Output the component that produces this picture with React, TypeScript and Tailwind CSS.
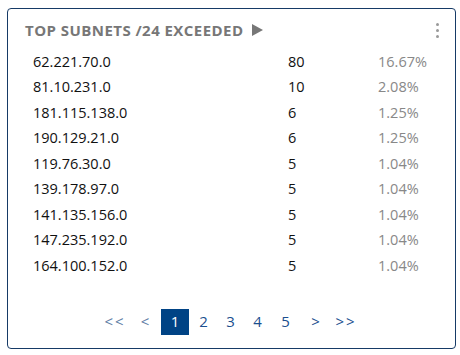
import {FC} from "react";

const rows: [string, string, string][] = [
    ["62.221.70.0", "80", "16.67%"],
    ["81.10.231.0", "10", "2.08%"],
    ["181.115.138.0", "6", "1.25%"],
    ["190.129.21.0", "6", "1.25%"],
    ["119.76.30.0", "5", "1.04%"],
    ["139.178.97.0", "5", "1.04%"],
    ["141.135.156.0", "5", "1.04%"],
    ["147.235.192.0", "5", "1.04%"],
    ["164.100.152.0", "5", "1.04%"],
];

const Pager: FC = () => (
    <div className="flex items-center justify-center mt-[30px] ml-[-2px] text-[15px] text-[#1b4f8f]">
        <span className="w-[30px] text-center text-[#5f7ea6] tracking-[2px]">&lt;&lt;</span>
        <span className="w-[30px] text-center text-[#5f7ea6]">&lt;</span>
        <span className="w-[30px] flex justify-center">
            <span className="w-[28px] h-[26px] bg-[#004385] text-white flex items-center justify-center">1</span>
        </span>
        <span className="w-[27px] text-center">2</span>
        <span className="w-[27px] text-center">3</span>
        <span className="w-[27px] text-center">4</span>
        <span className="w-[29px] text-center">5</span>
        <span className="w-[31px] text-center">&gt;</span>
        <span className="w-[30px] text-center tracking-[2px]">&gt;&gt;</span>
    </div>
);

export default function App() {
    return (
        <div className="w-[460px] h-[355px] bg-white pt-[8px] pl-[7px]" style={{fontFamily: '"Open Sans", sans-serif'}}>
            <div className="w-[449px] h-[341px] border border-[#163a66] rounded-[4px]">
                {/* Header */}
                <div className="flex items-center h-[20px] mt-[11px] pl-[17px] pr-[16px]">
                    <span className="text-[15px] font-bold text-[#777777] tracking-[0.45px]">TOP SUBNETS /24 EXCEEDED</span>
                    <svg width="11" height="12" viewBox="0 0 11 12" className="ml-[9px]">
                        <polygon points="0,0 11,6 0,12" fill="#777777"/>
                    </svg>
                    <div className="ml-auto flex flex-col gap-[3px] items-center">
                        <span className="w-[3px] h-[3px] rounded-full bg-[#999999]"/>
                        <span className="w-[3px] h-[3px] rounded-full bg-[#999999]"/>
                        <span className="w-[3px] h-[3px] rounded-full bg-[#999999]"/>
                    </div>
                </div>

                {/* Rows */}
                <div className="mt-[9px] pl-[25px]">
                    {rows.map((r, i) => (
                        <div key={i} className="grid grid-cols-[255px_90px_1fr] h-[25.5px] items-center text-[14.5px] text-[#111111]">
                            <span>{r[0]}</span>
                            <span>{r[1]}</span>
                            <span className="text-[#888888]">{r[2]}</span>
                        </div>
                    ))}
                </div>

                <Pager/>
            </div>
        </div>
    );
}
